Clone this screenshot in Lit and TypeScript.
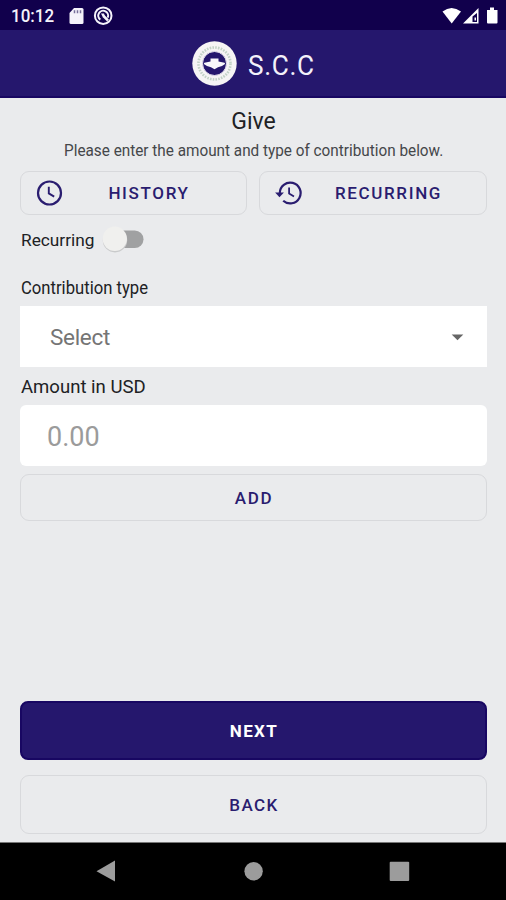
import { LitElement, html, css, svg } from "lit";
import { customElement } from "lit/decorators.js";

const clockIcon = svg`<circle cx="14.5" cy="14" r="11.5" fill="none" stroke="currentColor" stroke-width="2.200"/><path d="M13.800 7.800v6.600l5.400 3.200" fill="none" stroke="currentColor" stroke-width="1.900"/>`;
const restoreIcon = svg`<path d="M5.800 14a10.400 10.400 0 1 1 3.400 7.700" fill="none" stroke="currentColor" stroke-width="2.200"/><path d="M1.100 13.400h8.800l-4.400 4.800z" fill="currentColor"/><path d="M15.100 8.600v6l4.900 3" fill="none" stroke="currentColor" stroke-width="1.800"/>`;

@customElement("app-root")
export class AppRoot extends LitElement {
  static styles = css`
    :host {
      display: flex;
      flex-direction: column;
      height: 900px;
      overflow: hidden;
      background: #eaebed;
      font-family: Roboto, "Liberation Sans", sans-serif;
      color: #202124;
    }
    * { box-sizing: border-box; }
    svg { display: block; flex: none; }
    .status {
      height: 30px;
      flex: none;
      display: flex;
      align-items: center;
      background: #11004c;
      color: #f4f2fa;
      padding: 1px 7px 0 11px;
    }
    .time { font-size: 17.5px; font-weight: 500; width: 58px; white-space: nowrap; }
    .time span { display: inline-block; transform: scaleX(.97); transform-origin: 0 50%; }
    .status .right { margin-left: auto; }
    .header {
      height: 67.5px;
      flex: none;
      display: flex;
      align-items: center;
      padding: 0 0 0 192px;
      gap: 11px;
      background: #25176d;
      border-bottom: 2px solid #180762;
      color: #f3f1fa;
    }
    .brand { font-size: 27px; letter-spacing: .7px; line-height: 32px; padding-top: 6px; transform: scaleX(.97); transform-origin: 0 50%; }
    main { flex: 1; display: flex; flex-direction: column; padding: 0 19px 0 20px; }
    h1 { margin: 10px 0 0; font-size: 23px; font-weight: 400; line-height: 28px; text-align: center; }
    .sub { margin: 3px 0 0; line-height: 22px; font-size: 17px; text-align: center; white-space: nowrap; color: #45474a; }
    .narrow { display: inline-block; transform: scaleX(.9); }
    .left { transform-origin: 0 50%; }
    .toggle .narrow { transform: scaleX(1.015); }
    .type .narrow { transform: scaleX(.925); }
    .amount .narrow { transform: scaleX(1.03); }
    .pair { display: grid; grid-template-columns: 227px 228px; gap: 12px; margin-top: 10px; }
    button {
      font: 500 17px Roboto, "Liberation Sans", sans-serif;
      letter-spacing: 1.65px;
      color: #2a1d70;
      background: transparent;
      border: 1.5px solid #d8d9dc;
      border-radius: 9px;
      padding: 0 0 0 1px;
      display: flex;
      align-items: center;
      justify-content: center;
    }
    .pair button { height: 44px; padding: 0 0 0 14px; justify-content: flex-start; }
    .pair button span { flex: 1; text-align: center; padding: 1px 11px 0 0; }
    .toggle { display: flex; align-items: center; height: 32px; margin-top: 9px; }
    .label { font-size: 18px; line-height: 24px; white-space: nowrap; padding-left: .5px; }
    .toggle .label { width: 81px; font-size: 17px; }
    .type { margin-top: 20px; }
    .select {
      margin-top: 6px;
      height: 61px;
      background: #fff;
      display: flex;
      align-items: center;
      justify-content: space-between;
      padding: 2px 23px 0 30px;
      font-size: 22.5px;
      letter-spacing: -.3px;
      color: #757575;
    }
    .amount { margin-top: 8px; }
    .input {
      margin-top: 6px;
      height: 61px;
      background: #fff;
      border-radius: 6px;
      display: flex;
      align-items: center;
      padding: 4px 27px 0;
      font-size: 27px;
      color: #9b9b9b;
    }
    .add { height: 47px; margin-top: 8px; padding-top: 1px; }
    .next { height: 59px; margin-top: auto; color: #fff; background: #25176d; border: 2px solid #180762; border-radius: 8px; font-weight: 700; letter-spacing: 1.35px; }
    .back { height: 59px; margin: 15px 0 8px; letter-spacing: 1.4px; }
    nav { height: 58px; flex: none; background: #000; border-top: 1px solid #777; }
  `;

  render() {
    return html`
      <div class="status">
        <div class="time"><span>10:12</span></div>
        <svg width="45" height="20" viewBox="0 0 45 20">
          <path d="M5 2h8q1.500 0 1.500 1.500v13q0 1.500-1.500 1.500H2Q.5 18 .5 16.500V7z" fill="#f4f2fa"/>
          <path d="M5.500 4.200v3M8.500 4.200v3M11.500 4.200v3" stroke="#77709b" stroke-width="1.500"/>
          <circle cx="34.200" cy="9.700" r="8.300" fill="none" stroke="#f4f2fa" stroke-width="2"/>
          <path d="M31.300 13.600a4.900 4.900 0 1 1 7.400-2" fill="none" stroke="#f4f2fa" stroke-width="2"/>
          <path d="M34.500 10l4.500 4.500" stroke="#f4f2fa" stroke-width="2.500"/>
          <path d="M32 7.500h3l1 3-2 1z" fill="#f4f2fa"/>
        </svg>
        <svg class="right" width="58" height="20" viewBox="0 0 58 20">
          <path d="M1.500 5.500Q10.500-1.500 20 5.500L10.700 17.500z" fill="#fff"/>
          <path d="M37.500 2v15.500H22z" fill="#fff"/>
          <path d="M36 7v9h-4.500V10.500z" fill="#11004c"/><path d="M33.500 11.500h1.500v3h-1.500z" fill="#fff"/>
          <path d="M46 4h3V1.500h4V4h3.500v12.500q0 1-1 1H47q-1 0-1-1z" fill="#fff"/>
        </svg>
      </div>
      <header class="header">
        <svg width="45" height="46" viewBox="0 0 45 46">
          <circle cx="22.500" cy="23.500" r="22.200" fill="#f6f4f5"/>
          <circle cx="22.500" cy="23.500" r="16" fill="none" stroke="#c3d2c7" stroke-width="2.600" stroke-dasharray="1.600 1.200"/>
          <circle cx="22.500" cy="23.500" r="12" fill="#25176d" stroke="#e8e5ef"/>
          <path d="M18.500 18.500h8v3l6 1.200q1.200.5.200 1.600L30 26l-4 1.300-3.500 2-3.500-2-4-1.300-2.800-1.700q-1-1.100.2-1.600l6.100-1.200z" fill="#f8f7fb"/>
        </svg>
        <div class="brand">S.C.C</div>
      </header>
      <main>
        <h1>Give</h1>
        <p class="sub"><span class="narrow">Please enter the amount and type of contribution below.</span></p>
        <div class="pair">
          <button><svg width="28" height="28" viewBox="0 0 28 28">${clockIcon}</svg><span>HISTORY</span></button>
          <button><svg width="28" height="28" viewBox="0 0 28 28">${restoreIcon}</svg><span>RECURRING</span></button>
        </div>
        <div class="toggle">
          <div class="label"><span class="narrow left">Recurring</span></div>
          <svg width="46" height="32" viewBox="0 0 46 32">
            <rect x="6" y="6.500" width="36.500" height="17.500" rx="8.750" fill="#a0a1a2"/>
            <circle cx="14" cy="16.200" r="12.200" fill="#c9cacb"/>
            <circle cx="13.800" cy="14.800" r="12.200" fill="#f0f0ee"/>
          </svg>
        </div>
        <div class="label type"><span class="narrow left">Contribution type</span></div>
        <div class="select"><span>Select</span>
          <svg width="13" height="7" viewBox="0 0 13 7"><path d="M.7.500h11.600L6.500 6.300z" fill="#666"/></svg>
        </div>
        <div class="label amount"><span class="narrow left">Amount in USD</span></div>
        <div class="input">0.00</div>
        <button class="add">ADD</button>
        <button class="next">NEXT</button>
        <button class="back">BACK</button>
      </main>
      <nav>
        <svg width="506" height="57" viewBox="0 0 506 57">
          <path d="M96.500 28.300L115 17.500v21z" fill="#9c9c9c"/>
          <circle cx="253.600" cy="28.300" r="9.200" fill="#9c9c9c"/>
          <rect x="389.700" y="18.800" width="19.500" height="19.300" rx="1" fill="#9c9c9c"/>
        </svg>
      </nav>
    `;
  }
}
